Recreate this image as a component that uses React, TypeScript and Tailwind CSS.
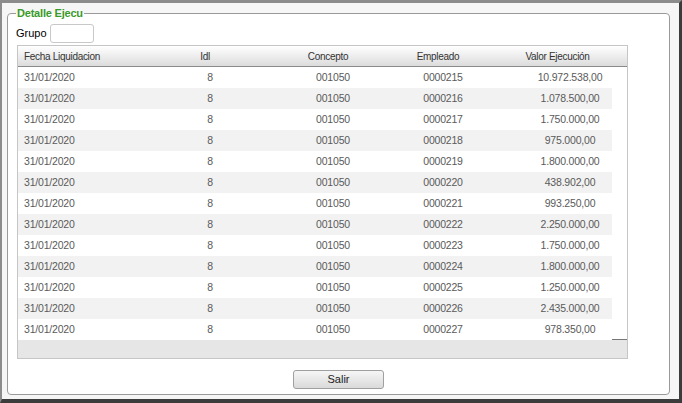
import React from "react";

const rows = [
  ["0000215", "10.972.538,00"],
  ["0000216", "1.078.500,00"],
  ["0000217", "1.750.000,00"],
  ["0000218", "975.000,00"],
  ["0000219", "1.800.000,00"],
  ["0000220", "438.902,00"],
  ["0000221", "993.250,00"],
  ["0000222", "2.250.000,00"],
  ["0000223", "1.750.000,00"],
  ["0000224", "1.800.000,00"],
  ["0000225", "1.250.000,00"],
  ["0000226", "2.435.000,00"],
  ["0000227", "978.350,00"],
];

function DetalleGrid() {
  return (
    <div className="ml-[1px] mt-[2px] flex h-[314px] w-[611px] flex-col border border-[#c6c6c6] bg-white">
      <div className="flex h-[21px] shrink-0 items-center border-b border-[#8a8a8a] bg-gradient-to-b from-white to-[#dcdcdc] text-[10px] tracking-[-0.3px] text-[#333]">
        <div className="w-[132px] pl-[6px]">Fecha Liquidacion</div>
        <div className="w-[110px] text-center">Idl</div>
        <div className="w-[136px] text-center">Concepto</div>
        <div className="w-[84px] text-center">Empleado</div>
        <div className="flex-1 pl-[8px] text-center">Valor Ejecución</div>
      </div>
      <div className="flex">
        <div className="w-[594px]">
          {rows.map(([emp, valor], idx) => (
            <div
              key={emp}
              className={`flex h-[21px] items-center text-[10.5px] tracking-[-0.2px] text-[#5a5a5a] ${idx % 2 === 1 ? "bg-[#f2f2f2]" : "bg-white"}`}
            >
              <div className="w-[132px] pl-[6px]">31/01/2020</div>
              <div className="w-[110px] pl-[10px] text-center">8</div>
              <div className="w-[136px] pl-[10px] text-center">001050</div>
              <div className="w-[84px] pl-[10px] text-center">{emp}</div>
              <div className="flex-1 pl-[48px] text-center">{valor}</div>
            </div>
          ))}
        </div>
        <div className="h-[273px] flex-1 border-b border-[#777]" />
      </div>
      <div className="flex-1 bg-[#e6e6e6]" />
    </div>
  );
}

export default function App() {
  return (
    <div
      className="h-[403px] w-[682px] border-b-[4px] border-l-[2px] border-r-[3px] border-t-[3px] border-b-[#3c3c3c] border-l-[#8c8c8c] border-r-[#3c3c3c] border-t-[#8c8c8c] bg-[#f6f6f6] pl-[5px] pt-[3px]"
      style={{ fontFamily: '"Liberation Sans", Arial, sans-serif' }}
    >
      <fieldset className="w-[663px] rounded-[4px] border border-[#9a9a9a] bg-white px-[8px] pb-[5px]">
        <legend className="px-[1px] text-[11px] font-bold leading-[14px] tracking-[-0.2px] text-[#3a9a2a]">Detalle Ejecu</legend>
        <div className="mt-[4px] flex h-[19px] items-center gap-[3px]">
          <span className="text-[11px] text-black">Grupo</span>
          <div className="h-[19px] w-[44px] rounded-[3px] border border-[#c8c8c8] bg-white" />
        </div>
        <DetalleGrid />
        <div className="mt-[11px] flex justify-center">
          <button className="h-[19px] w-[91px] rounded-[3px] border border-[#a0a0a0] bg-gradient-to-b from-[#f6f6f6] to-[#dadada] text-[11px] text-[#222]">
            Salir
          </button>
        </div>
      </fieldset>
    </div>
  );
}
